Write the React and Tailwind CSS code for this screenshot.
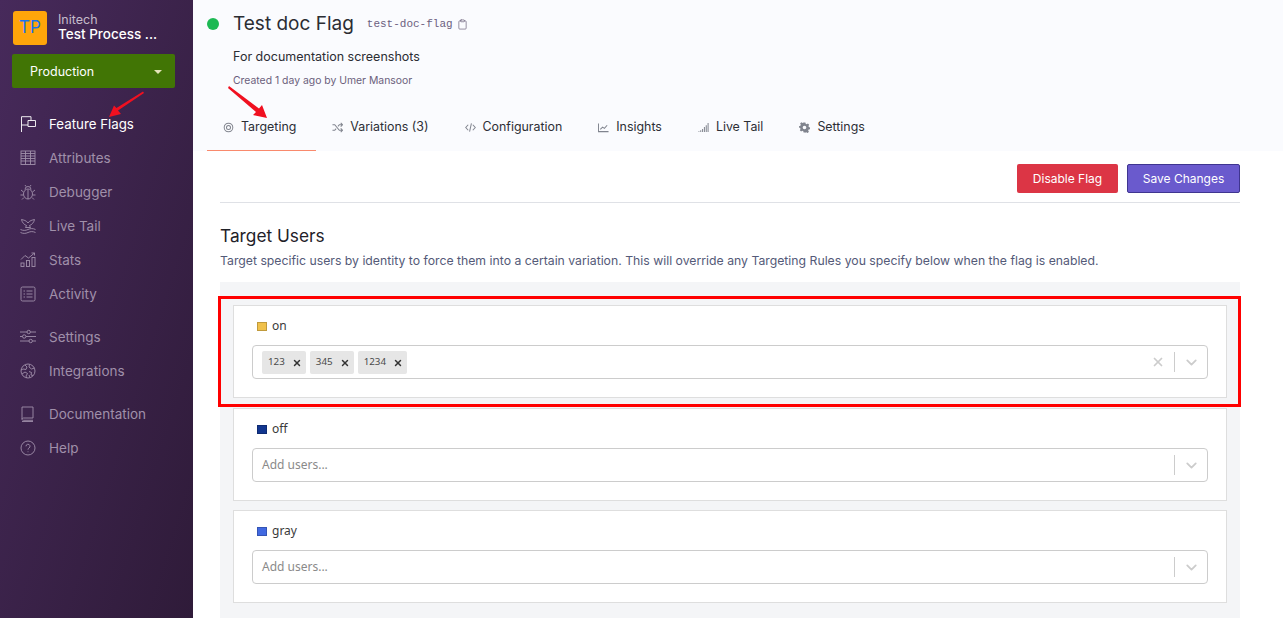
import React from 'react';
import { ChevronDown, X, Clipboard } from 'lucide-react';

const ui = { fontFamily: 'Inter, sans-serif' };
const body = { fontFamily: '"Noto Sans", sans-serif' };

// thin outline icons from the sidebar, drawn on a 16px box
function NavIcon({ name }) {
  const paths = {
    flag: <><path d="M1.500 16V.7h9.500v3.800" /><path d="M1.500 9h6.500V4.500h7.500v6H8V9" /></>,
    attributes: <><rect x="1" y="1" width="14" height="13.500" /><path d="M1 3.500h14M1 6h14M1 8.500h14M1 11h14M5.500 1v13.500M10.500 1v13.500" /></>,
    bug: <><ellipse cx="8" cy="10" rx="4.500" ry="5" /><path d="M5 5.500a3 3 0 0 1 6 0M8 5.500V15M3.500 8 1 6M12.500 8 15 6M3.500 11H.5M12.500 11h3M4 13.500 2 15.500M12 13.500l2 2M6 2.500 5 1M10 2.500 11 1" /></>,
    tail: <><path d="M1.500 1.500c2 .5 5 1 6.500 3.500 1.500-2.500 4.500-3 6.500-3.500-.5 3-3 5.500-5 6l1 2H5.500l1-2c-2-.5-4.500-3-5-6Z" /><path d="M.5 11.500c2.500 1.200 5 1.200 7.500 0s5-1.200 7.500 0M.5 14.500c2.500 1.200 5 1.200 7.500 0s5-1.200 7.500 0" /></>,
    stats: <><path d="M1 7.500 5 3.500l3.500 2.500L14.500 1M11.500 1h3v2.500" /><rect x="1" y="11" width="3" height="3.500" /><rect x="6.500" y="8.500" width="3" height="6" /><rect x="12" y="5.500" width="3" height="9" /></>,
    activity: <><rect x="1" y="1" width="14" height="14" rx="1.500" /><path d="M3.500 5h1.500M6.500 5h6M3.500 8h1.500M6.500 8h6M3.500 11h1.500M6.500 11h6" /></>,
    sliders: <><path d="M0 3h7M10.500 3H16M0 7.500h2.500M6 7.500h10M0 12h9M12.500 12H16" /><circle cx="8.700" cy="3" r="1.700" /><circle cx="4.200" cy="7.500" r="1.700" /><circle cx="10.700" cy="12" r="1.700" /></>,
    globe: <><circle cx="8" cy="8" r="7" /><path d="M5 2l2 2-1 2.500-3-.5-2 1M9.500 1.500l-.5 2.500 2.500 2 3-1M2 11l3-2 2.500 1.500L6 13l.5 2M9 8.500l2.500 1-.5 2.500 2 .5M9 12l1 2.500" /></>,
    book: <><path d="M2 13V1h11v11H3.500C2.700 12 2 12.400 2 13.200S2.700 14.300 3.500 14.300H13" /><path d="M2 15.500h11" /></>,
    help: <><circle cx="8" cy="8" r="7" /><path d="M6 6.300a2 2 0 1 1 3 1.700c-.7.400-1 .9-1 1.700" /><path d="M8 11.400v.8" /></>,
  };
  return (
    <svg viewBox="0 0 16 16" fill="none" stroke="currentColor" strokeWidth="0.9" className="w-[16px] h-[16px] shrink-0">
      {paths[name]}
    </svg>
  );
}

function NavItem({ icon, label, active }) {
  return (
    <div className={`h-[34px] pl-[20px] flex items-center gap-[13px] ${active ? 'text-white text-[13.300px]' : 'text-[#a090aa] text-[13.500px]'}`}>
      <NavIcon name={icon} />
      <span className={active ? 'pt-[1px]' : ''}>{label}</span>
    </div>
  );
}

function Sidebar() {
  return (
    <aside className="w-[193px] shrink-0 h-full bg-gradient-to-br from-[#472a5b] to-[#2f1b39] flex flex-col" style={ui}>
      <div className="pl-[13px] pt-[11px] flex items-center gap-[11px] h-[45px]">
        <div className="w-[34px] h-[34px] rounded-[3px] bg-[#ffa50a] text-[#1a73e8] text-[17px] flex items-center justify-center shrink-0">TP</div>
        <div className="flex flex-col leading-[15px] mb-[3px]">
          <span className="text-[12.500px] text-[#c5bccb]">Initech</span>
          <span className="text-[13.500px] font-medium text-white">Test Process ...</span>
        </div>
      </div>
      <div className="ml-[12px] w-[163px] mt-[9px] h-[34px] rounded-[2px] bg-[#417505] pl-[18px] pr-[13px] pt-[2px] flex items-center justify-between text-[12.500px] text-white">
        <span>Production</span>
        <span className="w-0 h-0 border-l-[4px] border-r-[4px] border-t-[4px] border-l-transparent border-r-transparent border-t-[#e4e4b8]" />
      </div>
      <nav className="mt-[19px] flex flex-col gap-[9px]">
        <div className="flex flex-col">
          <NavItem icon="flag" label="Feature Flags" active />
          <NavItem icon="attributes" label="Attributes" />
          <NavItem icon="bug" label="Debugger" />
          <NavItem icon="tail" label="Live Tail" />
          <NavItem icon="stats" label="Stats" />
          <NavItem icon="activity" label="Activity" />
        </div>
        <div className="flex flex-col">
          <NavItem icon="sliders" label="Settings" />
          <NavItem icon="globe" label="Integrations" />
        </div>
        <div className="flex flex-col">
          <NavItem icon="book" label="Documentation" />
          <NavItem icon="help" label="Help" />
        </div>
      </nav>
    </aside>
  );
}

const tabIcons = {
  target: <><circle cx="6" cy="6" r="4.700" /><circle cx="6" cy="6" r="2.200" /></>,
  shuffle: <><path d="M.5 3h2.500l5 6h3M.5 9H3l1.500-1.800M6.500 4.800 8 3h3M9.500 1 11.500 3 9.500 5M9.500 7 11.500 9l-2 2" /></>,
  code: <><path d="M3.500 3 .8 6l2.700 3M8.500 3l2.700 3-2.700 3M7 1.500 5 10.500" /></>,
  chart: <><path d="M.5 1.500V10.500H11.500" /><path d="M2.500 8 5 5.500l2 1.500L10 3.500" /></>,
  signal: <><path d="M1 11v-.8M3 11V9M5 11V7.500M7 11V5.500M9 11V3.500M11 11V1" /></>,
};

function Tab({ icon, label, active }) {
  return (
    <div className={`h-[49px] pt-[2px] flex items-center gap-[7px] text-[12.400px] text-[#2c2e35] pl-[16px] pr-[20px] border-b ${active ? 'border-[#f98a6d]' : 'border-transparent'}`}>
      {icon === 'gear' ? (
        <svg viewBox="0 0 12 12" className="w-[11px] h-[11px] text-[#80848e]" fill="currentColor">
          <path fillRule="evenodd" d="M5 .5h2l.3 1.500 1.100.5L9.700 1.700l1.400 1.400-.8 1.300.5 1.100 1.200.5v2l-1.500.3-.5 1.100.8 1.300-1.400 1.400-1.300-.8-1.100.5L7 11.500H5l-.3-1.500-1.100-.5-1.300.8L.9 8.900l.8-1.300-.5-1.100L0 6V4.500l1.500-.3.5-1.100-.8-1.400L2.600.3l1.300.8L5 .5ZM6 4a2 2 0 1 0 0 4 2 2 0 0 0 0-4Z" />
        </svg>
      ) : (
        <svg viewBox="0 0 12 12" className="w-[11px] h-[11px] text-[#80848e]" fill="none" stroke="currentColor" strokeWidth="1.100">
          {tabIcons[icon]}
        </svg>
      )}
      <span>{label}</span>
    </div>
  );
}

function Header() {
  return (
    <header className="bg-[#fafbfe] h-[151px] shrink-0 pl-[14px] flex flex-col" style={ui}>
      <div className="flex items-center pt-[12px] h-[36px]">
        <span className="w-[12px] h-[12px] rounded-full bg-[#1db954] mr-[14px]" />
        <h1 className="text-[19px] text-[#2b2d33] leading-[26px]">Test doc Flag</h1>
        <span className="ml-[13px] mt-[1px] text-[11px] text-[#6b6080] font-['Liberation_Mono',monospace]">test-doc-flag</span>
        <Clipboard size={11} strokeWidth={1.400} className="ml-[4px] text-[#5f5570]" />
      </div>
      <p className="pl-[26px] mt-[12px] text-[12.500px] leading-[18px] text-[#2b2d33]">For documentation screenshots</p>
      <p className="pl-[26px] mt-[7px] text-[10.400px] leading-[16px] text-[#6b5f7c]">Created 1 day ago by Umer Mansoor</p>
      <div className="flex mt-auto">
        <Tab icon="target" label="Targeting" active />
        <Tab icon="shuffle" label="Variations (3)" />
        <Tab icon="code" label="Configuration" />
        <Tab icon="chart" label="Insights" />
        <Tab icon="signal" label="Live Tail" />
        <Tab icon="gear" label="Settings" />
      </div>
    </header>
  );
}

function Chip({ label }) {
  return (
    <span className="h-[23px] rounded-[2px] bg-[#e6e6e6] pl-[6px] pr-[4px] pt-[1px] flex items-center gap-[7px] text-[9.800px] text-[#4a4a4a]">
      {label}
      <X size={10} strokeWidth={3.500} className="text-[#333]" />
    </span>
  );
}

function UserSelect({ chips }) {
  return (
    <div className="h-[34px] rounded-[4px] border border-[#cccccc] bg-white flex items-center" style={body}>
      <div className="flex-1 pl-[9px] flex items-center gap-[4px]">
        {chips ? chips.map((c) => <Chip key={c} label={c} />) : <span className="text-[12px] text-[#8a8a8a]">Add users...</span>}
      </div>
      {chips && <X size={14} strokeWidth={3} className="text-[#cccccc] mr-[9px]" />}
      <span className="w-px h-[20px] bg-[#cccccc]" />
      <ChevronDown size={17} strokeWidth={2.500} className="text-[#cccccc] ml-[8px] mr-[7px]" />
    </div>
  );
}

function VariationCard({ color, label, chips, className }) {
  return (
    <div className={`h-[93px] shrink-0 bg-white border border-[#dedede] px-[18px] pt-[10px] ${className || ''}`} style={body}>
      <div className="h-[20px] pl-[5px] flex items-center gap-[5px] text-[12px] text-[#3a3a3a]">
        <span className="w-[10px] h-[9px] border border-black/20" style={{ backgroundColor: color }} />
        <span>{label}</span>
      </div>
      <div className="mt-[9px]">
        <UserSelect chips={chips} />
      </div>
    </div>
  );
}

export default function App() {
  return (
    <div className="relative w-[1283px] h-[618px] overflow-hidden flex bg-white">
      <Sidebar />
      <main className="flex-1 min-w-0 flex flex-col">
        <Header />
        <div className="ml-[27px] w-[1020px] flex-1 min-h-0 flex flex-col" style={ui}>
          <div className="h-[52px] shrink-0 border-b border-[#dfe1e6] flex items-start justify-end gap-[9px] pt-[13px]">
            <button className="h-[29px] w-[101px] pt-[1px] rounded-[2px] bg-[#dc3545] text-white text-[12px]">Disable Flag</button>
            <button className="h-[29px] w-[113px] pt-[1px] rounded-[2px] bg-[#6a5acd] border border-[#3f3590] text-white text-[12px]">Save Changes</button>
          </div>
          <h2 className="mt-[21px] text-[17.300px] leading-[24px] text-[#1f2128]">Target Users</h2>
          <p className="mt-[4px] text-[12.250px] leading-[18px] text-[#545a78]">Target specific users by identity to force them into a certain variation. This will override any Targeting Rules you specify below when the flag is enabled.</p>
          <div className="mt-[12px] flex-1 min-h-0 bg-[#f4f5f7] px-[13px] pt-[23px] flex flex-col gap-[10px] overflow-hidden">
            <VariationCard color="#f0c14b" label="on" chips={['123', '345', '1234']} />
            <VariationCard color="#12368f" label="off" />
            <VariationCard color="#4169e1" label="gray" className="-mt-[1px]" />
          </div>
        </div>
      </main>

      {/* annotations drawn over the page */}
      <div className="absolute left-[218px] top-[296px] w-[1023px] h-[111px] border-[3px] border-[#ff0000] pointer-events-none" />
      <svg className="absolute left-0 top-0 pointer-events-none" width="300" height="130">
        <path d="M143 91.500 144 93 118 110.500 121 114 109 117 114 105.500 116.500 108Z" fill="#f01020" />
        <path d="M229 86 228 88 256 112 253 115 267 118 262 105 259 108.500Z" fill="#f01020" />
      </svg>
    </div>
  );
}
